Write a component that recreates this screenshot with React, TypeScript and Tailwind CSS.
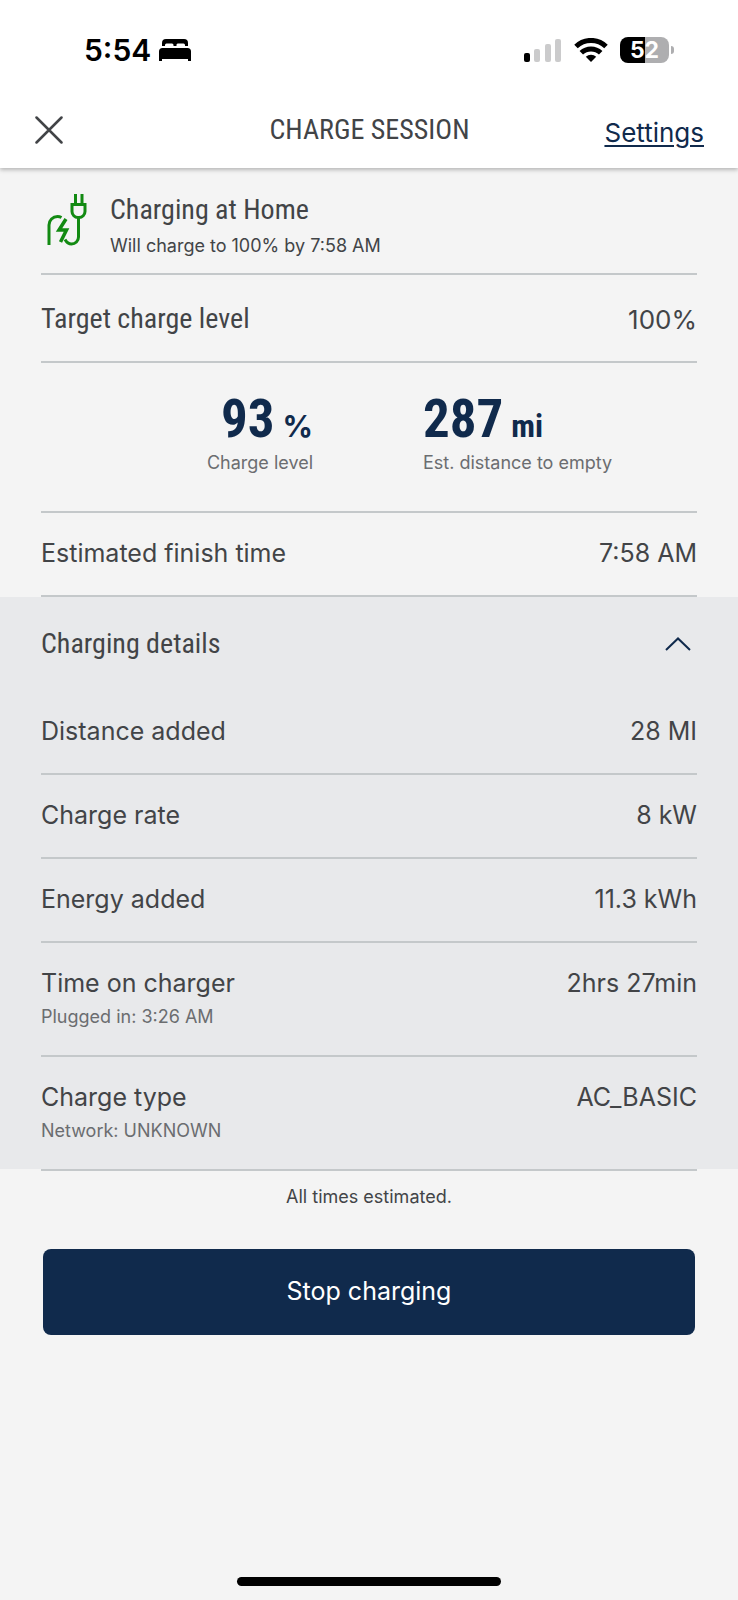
import React, { useState } from "react";

const details = [
	{ label: "Distance added", value: "28 MI" },
	{ label: "Charge rate", value: "8 kW" },
	{ label: "Energy added", value: "11.3 kWh" },
	{ label: "Time on charger", value: "2hrs 27min", note: "Plugged in: 3:26 AM" },
	{ label: "Charge type", value: "AC_BASIC", note: "Network: UNKNOWN" },
];

const StatusBar = () => {
	return (
		<div className="flex h-24 items-center justify-between pl-[84px] pr-16 pt-1 text-black">
			<div className="flex items-center gap-2">
				<span className="font-['Inter',sans-serif] text-[30px] leading-9 font-semibold">5:54</span>
				<svg className="h-[22px] w-8" viewBox="0 0 32 22" fill="currentColor">
					<path d="M3 7V4a4 4 0 0 1 4-4h18a4 4 0 0 1 4 4v3h-3V6a1.500 1.500 0 0 0-1.500-1.500h-5A1.500 1.500 0 0 0 17.500 6v1h-3V6A1.500 1.500 0 0 0 13 4.500H7.500A1.500 1.500 0 0 0 6 6v1z" />
					<path d="M0 22V12.500A3.500 3.500 0 0 1 3.500 9h25a3.500 3.500 0 0 1 3.500 3.500V22h-3v-2H3v2z" />
				</svg>
			</div>
			<div className="flex items-center">
				<svg className="h-6 w-[38px]" viewBox="0 0 38 24">
					<rect x="0" y="15" width="6" height="9" rx="2" fill="#000" />
					<rect x="10" y="11" width="6" height="13" rx="2" fill="#cbcbcc" />
					<rect x="21" y="6" width="6" height="18" rx="2" fill="#cbcbcc" />
					<rect x="31" y="1" width="6" height="23" rx="2" fill="#cbcbcc" />
				</svg>
				<svg className="ml-3 h-6 w-[34px]" viewBox="0 0 34 24">
					<g fill="none" stroke="#000" strokeWidth="5">
						<path d="M2 8.500a21.500 21.500 0 0 1 30 0" />
						<path d="M7.300 14.800a14 14 0 0 1 19.400 0" />
					</g>
					<path d="M17 24l-5.200-5.200a7.600 7.600 0 0 1 10.400 0z" fill="#000" />
				</svg>
				<div className="ml-3 flex h-[26px] w-[49px] items-center justify-center rounded-lg bg-linear-to-r from-black from-52% to-[#aeaeb0] to-52% font-['Inter',sans-serif] text-[23px] font-bold text-white">
					52
				</div>
				<div className="ml-0.5 h-2 w-[3px] rounded-r-full bg-[#aeaeb0]" />
			</div>
		</div>
	);
};

const PlugIcon = () => {
	return (
		<svg className="h-[52px] w-10" viewBox="0 0 40 52" fill="none" stroke="#128a12" strokeWidth="3">
			<path d="M2 51V31a8.500 8.500 0 0 1 8.500-8.500c1.500 0 2.700.3 4 1" />
			<path d="M19 25l-7 11h7.500l-6 12" strokeWidth="3.500" />
			<path d="M18 45.500c2 3.500 4 4.500 6.500 4.500a7 7 0 0 0 7-7V24" />
			<path d="M25 10.500h13v7a6 6 0 0 1-6 6h-1a6 6 0 0 1-6-6z" />
			<path d="M28.500 10V0M35 10V0" />
		</svg>
	);
};

const Row = ({ label, value, note }: { label: string; value: string; note?: string }) => {
	return (
		<div className="border-b-2 border-[#c4c8ca] pt-[22px] pb-6 last:border-b-0">
			<div className="flex justify-between text-[25px] leading-9">
				<dt>{label}</dt>
				<dd>{value}</dd>
			</div>
			{note && <dd className="mt-1 pb-0.5 text-[18px] leading-6 text-[#6b6d70]">{note}</dd>}
		</div>
	);
};

const App = () => {
	const [open, setOpen] = useState(true);

	return (
		<div className="flex min-h-screen flex-col bg-[#f4f4f4] font-['Inter',sans-serif] text-[#424447]">
			<header className="relative bg-white shadow-[0_2px_4px_rgba(0,0,0,0.25)]">
				<StatusBar />
				<div className="grid h-[72px] grid-cols-3 items-center pr-[34px] pb-1 pl-[35px]">
					<button aria-label="Close" className="w-7 cursor-pointer">
						<svg className="h-7 w-7" viewBox="0 0 28 28" stroke="currentColor" strokeWidth="2.500" strokeLinecap="round">
							<path d="M1.500 1.500l25 25M26.500 1.500l-25 25" />
						</svg>
					</button>
					<h1 className="text-center font-['Roboto_Condensed',Roboto,sans-serif] text-[28px] whitespace-nowrap">
						CHARGE SESSION
					</h1>
					<a href="#" className="pt-1 text-right text-[26px] text-[#102a4c] underline decoration-2 underline-offset-3">
						Settings
					</a>
				</div>
			</header>

			<main>
				<div className="px-[41px]">
					<div className="flex h-[107px] items-start gap-[23px] border-b-2 border-[#c4c8ca] pt-[26px] pl-1.5">
						<PlugIcon />
						<div>
							<h2 className="font-['Roboto_Condensed',Roboto,sans-serif] text-[28px] leading-8">
								Charging at Home
							</h2>
							<p className="mt-2 text-[18px] leading-6">Will charge to 100% by 7:58 AM</p>
						</div>
					</div>

					<div className="flex h-[88px] items-center justify-between border-b-2 border-[#c4c8ca] pt-0.5">
						<h2 className="font-['Roboto_Condensed',Roboto,sans-serif] text-[28px]">Target charge level</h2>
						<span className="text-[26px]">100%</span>
					</div>

					<div className="grid grid-cols-[272fr_384fr] border-b-2 border-[#c4c8ca] pt-8 pb-9">
						<div className="text-right">
							<p className="flex h-12 items-baseline justify-end gap-2 font-['Roboto_Condensed',Roboto,sans-serif] text-[53px] leading-[48px] font-bold text-[#102a4c]">
								93 <span className="font-['Inter',sans-serif] text-[30px]">%</span>
							</p>
							<p className="mt-2 text-[18px] leading-6 text-[#6b6d70]">Charge level</p>
						</div>
						<div className="pl-[110px]">
							<p className="flex h-12 items-baseline gap-2 font-['Roboto_Condensed',Roboto,sans-serif] text-[53px] leading-[48px] font-bold text-[#102a4c]">
								287 <span className="text-[32px]">mi</span>
							</p>
							<p className="mt-2 text-[18px] leading-6 text-[#6b6d70]">Est. distance to empty</p>
						</div>
					</div>

					<dl className="border-b-2 border-[#c4c8ca]">
						<Row label="Estimated finish time" value="7:58 AM" />
					</dl>
				</div>

				<section className="bg-[#e8e9eb] px-[41px]">
					<button
						onClick={() => setOpen(!open)}
						aria-expanded={open}
						className="flex h-[94px] w-full cursor-pointer items-center justify-between pr-1.5"
					>
						<span className="font-['Roboto_Condensed',Roboto,sans-serif] text-[28px]">Charging details</span>
						<svg className="h-[14px] w-[26px]" viewBox="0 0 26 14" fill="none" stroke="#102a4c" strokeWidth="2">
							<path d="M1 13L13 1.500 25 13" />
						</svg>
					</button>
					{open && (
						<dl>
							{details.map((item) => (
								<Row key={item.label} {...item} />
							))}
						</dl>
					)}
				</section>

				<div className="px-[41px]">
					<p className="border-t-2 border-[#c4c8ca] pt-[14px] text-center text-[18px] leading-6">
						All times estimated.
					</p>
					<div className="px-0.5 pt-10">
						<button className="h-[86px] w-full cursor-pointer rounded-lg bg-[#102a4c] text-[25px] text-white">
							Stop charging
						</button>
					</div>
				</div>
			</main>

			<div className="mx-auto mt-auto mb-3.5 h-[9px] w-[264px] rounded-full bg-black" />
		</div>
	);
};

export default App;
